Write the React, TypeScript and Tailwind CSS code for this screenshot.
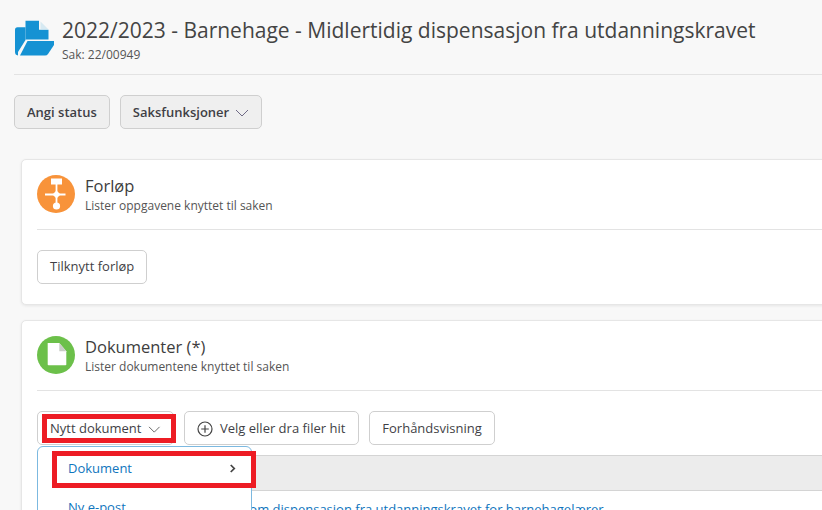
import React from 'react';

const Chevron = ({ className }: { className?: string }) => (
  <svg viewBox="0 0 14 8" className={className} fill="none" stroke="currentColor" strokeWidth="1">
    <path d="M1 1l6 6 6-6" />
  </svg>
);

const CaseIcon = () => (
  <svg viewBox="0 0 40 38" className="w-[40px] h-[38px] shrink-0">
    <path d="M10.500 1.700H24v9h9.500V20.500H10.500z" fill="#1592d3" />
    <path d="M2.500 8.300H10.500V21L3 33V36.500Q0 36 0 33V11Q0 8.300 2.500 8.300z" fill="#1592d3" />
    <path d="M5 36.500L12.500 22H39V26L33 35Q32 36.500 30 36.500z" fill="#1592d3" />
    <path d="M25.500 2.500L33 10h-7.500z" fill="#1592d3" opacity="0.15" />
  </svg>
);

const FlowIcon = () => (
  <div className="w-[38px] h-[38px] rounded-full bg-[#f8933a] shrink-0 flex items-center justify-center">
    <svg viewBox="0 0 38 38" className="w-[38px] h-[38px]">
      <rect x="14" y="3.500" width="11" height="6" fill="#fff" />
      <path d="M19.500 9v21M8 19.500h20.500" stroke="#fff" strokeWidth="1.800" />
      <path d="M19.500 15.500l4 4-4 4-4-4z" fill="#fff" />
      <circle cx="19.500" cy="31" r="3.600" fill="#fff" />
    </svg>
  </div>
);

const DocIcon = () => (
  <div className="w-[38px] h-[38px] rounded-full bg-[#6cc04a] shrink-0 flex items-center justify-center">
    <svg viewBox="0 0 38 38" className="w-[38px] h-[38px]">
      <path d="M10.700 7h11.600l7 8.300V28.500q0 .800-.800.800H11.500q-.800 0-.800-.800z" fill="#fff" />
      <path d="M22.300 7l7 8.300h-7z" fill="#c9cdc6" />
    </svg>
  </div>
);

const Btn = ({ children, className = '' }: { children: React.ReactNode; className?: string }) => (
  <button type="button" className={`h-[34px] px-3 rounded-[5px] border border-[#cfcfcf] text-[13px] text-[#3f3f46] flex items-center whitespace-nowrap ${className}`}>
    {children}
  </button>
);

const SectionHead = ({ icon, title, sub }: { icon: React.ReactNode; title: string; sub: string }) => (
  <div className="flex items-start gap-[10px] h-[55px] border-b border-[#e3e3e3]">
    {icon}
    <div className="pt-[1px]">
      <h3 className="text-[16.500px] leading-[20px] text-[#3d3d3d] font-normal">{title}</h3>
      <p className="text-[12px] leading-[16px] mt-[2px] text-[#555]">{sub}</p>
    </div>
  </div>
);

export default function App() {
  return (
    <div className="relative w-[822px] h-[510px] overflow-hidden bg-[#f8f8f8] font-['Open_Sans',sans-serif]">
      <header className="ml-[14px] h-[75px] border-b border-[#e3e3e3] flex items-start pt-[19px] gap-[7px] pl-[1px]">
        <CaseIcon />
        <div>
          <h1 className="text-[21px] leading-[22px] text-[#444] font-normal whitespace-nowrap">2022/2023 - Barnehage - Midlertidig dispensasjon fra utdanningskravet</h1>
          <p className="text-[12px] leading-[16px] mt-[6px] text-[#555]">Sak: 22/00949</p>
        </div>
      </header>

      <div className="flex gap-[10px] ml-[14px] mt-[20px]">
        <Btn className="bg-[#efefef] font-semibold pt-[2px]">Angi status</Btn>
        <Btn className="bg-[#efefef] font-semibold pt-[2px]">
          Saksfunksjoner
          <Chevron className="w-[14px] h-[8px] ml-[6px] text-[#6f6a86]" />
        </Btn>
      </div>

      <section className="ml-[21px] w-[830px] mt-[30px] h-[146px] bg-white border border-[#e6e6e6] rounded-[5px] shadow-[0_1px_3px_rgba(0,0,0,0.08)] pt-[15px] pl-[15px]">
        <SectionHead icon={<FlowIcon />} title="Forløp" sub="Lister oppgavene knyttet til saken" />
        <div className="mt-[20px]">
          <Btn className="bg-white">Tilknytt forløp</Btn>
        </div>
      </section>

      <section className="relative ml-[21px] w-[830px] mt-[15px] h-[200px] bg-white border border-[#e6e6e6] rounded-[5px] shadow-[0_1px_3px_rgba(0,0,0,0.08)] pt-[15px] pl-[15px]">
        <SectionHead icon={<DocIcon />} title="Dokumenter (*)" sub="Lister dokumentene knyttet til saken" />
        <div className="flex gap-[10px] mt-[20px]">
          <Btn className="bg-white w-[137px] pt-[2px]">
            Nytt dokument
            <Chevron className="w-[13px] h-[7px] ml-[7px] text-[#555]" />
          </Btn>
          <Btn className="bg-white pr-[13px] pt-[2px]">
            <svg viewBox="0 0 16 16" className="w-[16px] h-[16px] mr-[7px] text-[#444]" fill="none" stroke="currentColor" strokeWidth="1.200">
              <circle cx="8" cy="8" r="7" />
              <path d="M8 4.200v7.600M4.200 8h7.600" />
            </svg>
            Velg eller dra filer hit
          </Btn>
          <Btn className="bg-white pt-[2px]">Forhåndsvisning</Btn>
        </div>
        <div className="mt-[10px] h-[36px] bg-[#ececec] border-y border-[#d4d4d4]" />
        <p className="mt-[9px] ml-[164px] text-[13px] leading-[18px] text-[#0f75bd] whitespace-nowrap">Søknad om dispensasjon fra utdanningskravet for barnehagelærer</p>

        <div className="absolute left-[15px] top-[125px] w-[215px] h-[90px] bg-white border border-[#7cb9e0] rounded-t-[6px] text-[13px] text-[#0f75bd]">
          <div className="h-[43px] pl-[30px] pr-[15px] flex items-center justify-between">
            Dokument
            <svg viewBox="0 0 8 10" className="w-[7px] h-[9px] text-[#444]" fill="none" stroke="currentColor" strokeWidth="2">
              <path d="M2 1l4 4-4 4" />
            </svg>
          </div>
          <div className="pl-[30px] mt-[8px]">Ny e-post</div>
        </div>
      </section>

      {/* rode markeringer lagt over skjermbildet */}
      <div className="absolute left-[42px] top-[414px] w-[134px] h-[29px] border-[5px] border-[#ed1c24]" />
      <div className="absolute left-[52px] top-[451px] w-[204px] h-[37px] border-[5px] border-[#ed1c24]" />
    </div>
  );
}
